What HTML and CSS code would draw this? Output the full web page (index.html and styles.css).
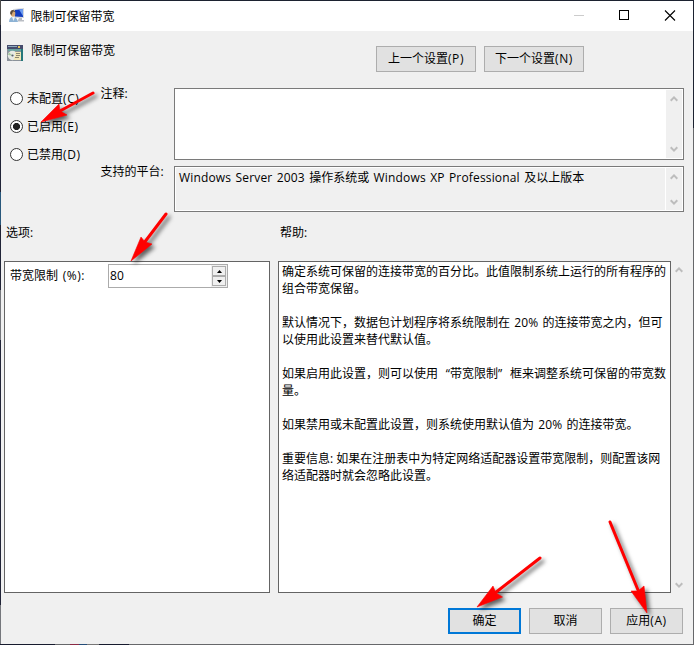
FILE: index.html
```html
<!DOCTYPE html>
<html lang="zh-CN">
<head>
<meta charset="utf-8">
<title>限制可保留带宽</title>
<link rel="stylesheet" href="styles.css">
</head>
<body>
<div class="desktop">
<div class="window">
  <header class="titlebar">
    <svg class="app-icon" width="16" height="16" viewBox="0 0 16 16">
      <path d="M4 1L15 0V10L5 10Z" fill="#d5d8dc"/>
      <path d="M6 2L14 1V9L6 8.500Z" fill="#123dbe"/>
      <path d="M10 1.500L14 1V8Z" fill="#6e9df0"/>
      <path d="M10 10H13V12H15V13.500H9V12Z" fill="#b9bdc4"/>
      <ellipse cx="4" cy="5.500" rx="2.300" ry="3.200" fill="#d6a874"/>
      <path d="M1.200 6C.5 1.500 5.500.5 6.500 4L4 3.500 2.500 7Z" fill="#5a4b3c"/>
      <path d="M0 14Q.5 8.500 4 9Q8 9 9 14Z" fill="#8db2d4"/>
      <path d="M3 9L4.500 13 6 9Z" fill="#edf4fa"/>
    </svg>
    <span class="title">限制可保留带宽</span>
    <svg class="controls" width="119" height="30" viewBox="0 0 119 30" fill="none" shape-rendering="crispEdges">
      <path d="M0 14.500H10" stroke="#ccc"/>
      <path d="M45.500 9.500H54.500V18.500H45.500Z" stroke="#000"/>
      <path d="M91 9.500L101 19.500M101 9.500L91 19.500" stroke="#000" stroke-width="1.100" shape-rendering="auto"/>
    </svg>
  </header>

  <section class="heading">
    <svg class="policy-icon" width="16" height="16" viewBox="0 0 16 16">
      <path d="M0 0H16V16H0Z" fill="#8b929a"/>
      <path d="M0 0H16V4H0Z" fill="#454b6c"/>
      <path d="M1 1H10V2H1Z" fill="#8eabbd"/>
      <path d="M11 1H13V3H11Z" fill="#e4c45e"/>
      <path d="M14 4H16V16H14Z" fill="#25777a"/>
      <path d="M1 4H14V6H1Z" fill="#6aa3a0"/>
      <circle cx="5.500" cy="10.500" r="4.700" fill="#e6e9e4"/>
      <path d="M5.500 10.500L2 7.500 1 10Z" fill="#a7cb9f"/>
      <circle cx="5.500" cy="10.500" r="1.100" fill="#58606a"/>
      <path d="M8 7H14V15H7V12H8Z" fill="#f1e6b7"/>
      <path d="M9 8.500H13M9 10.500H13M8 12.500H12" stroke="#8b8572"/>
    </svg>
    <h1>限制可保留带宽</h1>
    <div class="nav">
      <button class="button wide">上一个设置<span class="key">(P)</span></button>
      <button class="button wide">下一个设置<span class="key">(N)</span></button>
    </div>
  </section>

  <section class="settings">
    <div class="states">
      <label class="state"><i class="radio"></i><span>未配置<span class="key">(C)</span></span></label>
      <label class="state"><i class="radio checked"></i><span>已启用<span class="key">(E)</span></span></label>
      <label class="state"><i class="radio"></i><span>已禁用<span class="key">(D)</span></span></label>
    </div>
    <div class="field-label">注释:</div>
    <div class="field comment">
      <div class="field-text"></div>
      <div class="scroll"><svg width="8" height="6" viewBox="0 0 8 6"><path d="M.7 4.700L4 1.400 7.300 4.700"/></svg><svg width="8" height="6" viewBox="0 0 8 6"><path d="M.7 1.300L4 4.600 7.300 1.300"/></svg></div>
    </div>
    <div class="field-label">支持的平台:</div>
    <div class="field platform">
      <div class="field-text"><span class="latin">Windows Server 2003 </span>操作系统或<span class="latin"> Windows XP Professional </span>及以上版本</div>
      <div class="scroll"><svg width="8" height="6" viewBox="0 0 8 6"><path d="M.7 4.700L4 1.400 7.300 4.700"/></svg><svg width="8" height="6" viewBox="0 0 8 6"><path d="M.7 1.300L4 4.600 7.300 1.300"/></svg></div>
    </div>
  </section>

  <section class="panels">
    <h2>选项:</h2>
    <h2>帮助:</h2>
    <div class="panel options">
      <span class="option-name">带宽限制<span class="latin"> (%):</span></span>
      <div class="spinner">
        <span class="value">80</span>
        <div class="steps">
          <i class="step"><svg width="5" height="3" viewBox="0 0 5 3"><path d="M0 3L2.500 0 5 3Z"/></svg></i>
          <i class="step"><svg width="5" height="3" viewBox="0 0 5 3"><path d="M0 0L2.500 3 5 0Z"/></svg></i>
        </div>
      </div>
    </div>
    <div class="panel help">
      <p>确定系统可保留的连接带宽的百分比。此值限制系统上运行的所有程序的<br>组合带宽保留。</p>
      <p>默认情况下，数据包计划程序将系统限制在<span class="latin"> 20% </span>的连接带宽之内，但可<br>以使用此设置来替代默认值。</p>
      <p>如果启用此设置，则可以使用<span class="quote open">“</span>带宽限制<span class="quote close">”</span>框来调整系统可保留的带宽数<br>量。</p>
      <p>如果禁用或未配置此设置，则系统使用默认值为<span class="latin"> 20% </span>的连接带宽。</p>
      <p>重要信息: 如果在注册表中为特定网络适配器设置带宽限制，则配置该网<br>络适配器时就会忽略此设置。</p>
    </div>
    <div class="scroll outer"><svg width="8" height="6" viewBox="0 0 8 6"><path d="M.7 4.700L4 1.400 7.300 4.700"/></svg><svg width="8" height="6" viewBox="0 0 8 6"><path d="M.7 1.300L4 4.600 7.300 1.300"/></svg></div>
  </section>

  <footer class="actions">
    <button class="button primary">确定</button>
    <button class="button">取消</button>
    <button class="button">应用<span class="key">(A)</span></button>
  </footer>
</div>
<svg class="arrows" width="694" height="645" viewBox="0 0 694 645">
  <g><path class="shaft" d="M93 93L60 111"/><path d="M41 122L59 104 60 111 67 115Z"/></g>
  <g><path class="shaft" d="M166 214L144 243"/><path d="M131 261L141 237 145 242 152 244Z"/></g>
  <g><path class="shaft" d="M540 558L495 593"/><path d="M477 607L493 586 496 593 502.500 597Z"/></g>
  <g><path class="shaft" d="M610 522L638 590"/><path d="M647 613L631 591 638 591 644 586Z"/></g>
</svg>
</div>
</body>
</html>
```
FILE: styles.css
```css
* { box-sizing: border-box; }

body {
  margin: 0;
  color: #000;
  font: 12px/17px "Open Sans", "Noto Sans CJK SC", sans-serif;
}

.desktop {
  position: relative;
  width: 694px;
  height: 645px;
  padding: 1px;
  overflow: hidden;
  background: linear-gradient(#1c2230 0 128px, #66676a 128px) right / 1px 100% no-repeat,
    linear-gradient(90deg, #171b2e 0 55px, #66676a 55px 70px, #8b2944 70px 79px, #244c78 79px 87px, #777 87px 99px, #171b2e 99px 129px, #66676a 129px) bottom / 100% 1px no-repeat,
    linear-gradient(#4b4a49 0 25px, #202437 25px 90px, #28577b 90px 110px, #202437 110px 192px, #28577b 192px 225px, #202437 225px 290px, #75777c 290px 340px, #202437 340px 605px, #75777c 605px) left / 1px 100% no-repeat,
    #1c2230;
}

.window {
  display: flex;
  flex-direction: column;
  width: 692px;
  height: 643px;
  background: #f0f0f0;
}

.titlebar {
  display: flex;
  height: 30px;
  flex: none;
  align-items: center;
  padding: 0 0 0 8px;
  background: #fff;
}

.title { margin-left: 5.5px; }
.controls { margin-left: auto; }

.heading {
  display: flex;
  height: 57px;
  flex: none;
  align-items: flex-start;
  padding: 14px 109px 0 6px;
}

h1, h2, p { margin: 0; font-size: 12px; font-weight: 400; }
h1 { margin: -3px 0 0 8px; }

.nav {
  display: flex;
  gap: 8px;
  margin: 1px 0 0 auto;
}

.button {
  width: 73px;
  height: 26px;
  padding: 0 0 1px;
  border: 1px solid #adadad;
  border-radius: 0;
  background: #e1e1e1;
  color: #000;
  font: inherit;
}

.button.wide { width: 100px; }
.button.primary { border: 2px solid #0078d7; }
.key { letter-spacing: .6px; }

.settings {
  display: grid;
  flex: none;
  grid-template: 72px 46px / 92px 74px 510px;
  gap: 6px 0;
  padding: 0 0 0 7px;
}

.states {
  display: grid;
  grid-row: span 2;
  grid-auto-rows: 20px;
  align-content: start;
  gap: 8px;
  padding-left: 2px;
}

.state { display: flex; align-items: center; gap: 4px; white-space: nowrap; }

.radio {
  display: block;
  width: 13px;
  height: 13px;
  border: 1px solid #333;
  border-radius: 50%;
  background: #fff;
}

.radio.checked { background: radial-gradient(circle, #222 0 3.2px, #fff 3.9px); }
.field-label { margin-top: -3px; padding-left: .5px; white-space: nowrap; }

.field {
  display: flex;
  border: 1px solid #7a7a7a;
  background: #fff;
}

.field-text { flex: 1; padding: 2px 0 0 4px; white-space: pre; }
.platform { padding: 1px; }
.platform .field-text { padding: 1px 0 0 3px; background: #f0f0f0; }
.latin { letter-spacing: .1px; word-spacing: 1.1px; }
.platform .latin { letter-spacing: .16px; }

.scroll {
  display: flex;
  width: 16px;
  flex-direction: column;
  align-items: center;
  justify-content: space-between;
  padding: 6px 0;
  background: #f0f0f0;
}

.scroll path { fill: none; stroke: #bdbdbd; stroke-width: 2; }
.comment .scroll { margin: 1px; }
.platform .scroll { margin-left: 1px; padding: 6px 0 5px; }

.panels {
  display: grid;
  flex: none;
  grid-template: 49px 332px / 266px 393px 17px;
  column-gap: 8px;
  padding-left: 3px;
}

.panels h2 { padding: 12px 0 0 2px; }
.panel { border: 1px solid #646464; background: #fff; }

.options {
  display: flex;
  grid-column: 1;
  align-items: flex-start;
  padding: 2px 0 0 5px;
}

.option-name { width: 98px; padding-top: 3px; }
.option-name .latin { letter-spacing: .5px; }

.spinner {
  display: flex;
  width: 120px;
  height: 24px;
  justify-content: space-between;
  border: 1px solid #ababab;
}

.value { padding: 2px 0 0 1px; letter-spacing: .2px; }
.steps { display: grid; width: 16px; padding: 1px; background: #f0f0f0; }
.step { display: grid; place-items: center; border: 1px solid #adadad; background: #f0f0f0; }

.help { padding: 1px 0 0 3px; white-space: nowrap; }
.help p + p { margin-top: 17px; }
.quote { display: inline-block; width: 12px; }
.open { text-align: right; }
.outer { margin-left: -8px; padding: 6px 0 5px; }

.actions {
  display: flex;
  justify-content: flex-end;
  gap: 8px;
  padding: 15px 10px 0 0;
}

.arrows { position: absolute; inset: 0; pointer-events: none; }
.arrows g { fill: #f00; stroke: #f00; stroke-width: .6; filter: drop-shadow(3px 3px 2px #0009); }
.arrows .shaft { fill: none; stroke-width: 3; stroke-linecap: round; }
```
